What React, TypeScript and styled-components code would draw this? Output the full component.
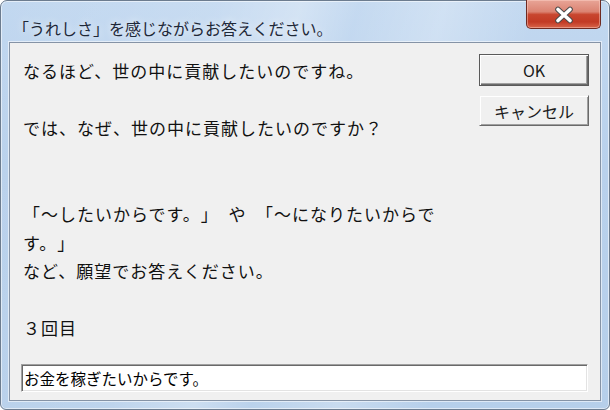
import React from 'react';
import styled, { createGlobalStyle } from 'styled-components';

const GlobalStyle = createGlobalStyle`
  html, body {
    margin: 0;
    padding: 0;
    background: #ffffff;
  }
  * {
    box-sizing: border-box;
    text-spacing-trim: space-all;
  }
`;

const promptLines = [
  'なるほど、世の中に貢献したいのですね。',
  '',
  'では、なぜ、世の中に貢献したいのですか？',
  '',
  '',
  '「～したいからです。」  や  「～になりたいからで',
  'す。」',
  'など、願望でお答えください。',
  '',
  '３回目',
];

const App: React.FC = () => {
  return (
    <>
      <GlobalStyle />
      <Window>
        <TitleBar>
          <Title>「うれしさ」を感じながらお答えください。</Title>
          <CloseButton aria-label="閉じる">
            <svg width="22" height="18" viewBox="0 0 22 18">
              <path
                d="M5 3.5 L17 14.5 M17 3.5 L5 14.5"
                stroke="#4a4a4a"
                strokeWidth="5.6"
                strokeLinecap="round"
                fill="none"
              />
              <path
                d="M5 3.5 L17 14.5 M17 3.5 L5 14.5"
                stroke="#ffffff"
                strokeWidth="3.6"
                strokeLinecap="round"
                fill="none"
              />
            </svg>
          </CloseButton>
        </TitleBar>
        <Client>
          <Prompt>
            {promptLines.map((line, i) => (
              <PromptLine key={i}>{line || '\u00a0'}</PromptLine>
            ))}
          </Prompt>
          <Buttons>
            <DialogButton $isDefault>OK</DialogButton>
            <DialogButton>キャンセル</DialogButton>
          </Buttons>
          <AnswerInput defaultValue="お金を稼ぎたいからです。" />
        </Client>
      </Window>
    </>
  );
};

export default App;

const Window = styled.div`
  width: 610px;
  height: 410px;
  display: flex;
  flex-direction: column;
  padding: 0 8px 8px 8px;
  border: 1px solid #6c7c8f;
  border-radius: 7px 7px 6px 6px;
  background:
    linear-gradient(
      105deg,
      rgba(255, 255, 255, 0) 0%,
      rgba(255, 255, 255, 0.1) 30%,
      rgba(255, 255, 255, 0.3) 42%,
      rgba(255, 255, 255, 0.05) 50%,
      rgba(255, 255, 255, 0.25) 62%,
      rgba(255, 255, 255, 0) 75%
    ),
    linear-gradient(to bottom, #c2d8f0 0%, #b9d1ec 40%, #b6cfea 100%);
  box-shadow: inset 0 0 0 1px rgba(255, 255, 255, 0.55);
`;

const TitleBar = styled.div`
  height: 41px;
  display: flex;
  justify-content: space-between;
  align-items: flex-start;
`;

const Title = styled.div`
  padding: 17px 0 0 4px;
  font-family: 'Noto Sans CJK JP', 'Noto Sans', sans-serif;
  font-size: 16px;
  line-height: 21px;
  color: #1e2838;
  text-shadow: 0 0 8px rgba(255, 255, 255, 0.9);
`;

const CloseButton = styled.div`
  width: 75px;
  height: 29px;
  margin-top: -1px;
  display: flex;
  align-items: center;
  justify-content: center;
  padding-top: 1px;
  border: 1px solid #6e2a22;
  border-top: none;
  border-radius: 0 0 5px 5px;
  background: linear-gradient(
    to bottom,
    #e8a597 0%,
    #db8372 42%,
    #c8462f 52%,
    #c23a25 78%,
    #d8654a 100%
  );
  box-shadow: inset 0 0 0 1px rgba(255, 215, 205, 0.45);
`;

const Client = styled.div`
  flex: 1;
  display: grid;
  grid-template-columns: 1fr auto;
  grid-template-rows: 1fr auto;
  background: #f0f0f0;
  border: 1px solid #8593a6;
  box-shadow: 0 0 0 1px rgba(255, 255, 255, 0.55);
`;

const Prompt = styled.div`
  padding: 14px 0 0 13px;
  font-family: 'Noto Sans CJK JP', 'Noto Sans', sans-serif;
  font-size: 17px;
  letter-spacing: 1px;
  color: #111;
`;

const PromptLine = styled.div`
  line-height: 28.6px;
  white-space: pre;
`;

const Buttons = styled.div`
  display: flex;
  flex-direction: column;
  gap: 9px;
  margin: 11px 11px 0 0;
  width: 110px;
`;

const DialogButton = styled.button<{ $isDefault?: boolean }>`
  height: ${(p) => (p.$isDefault ? '32px' : '31px')};
  padding: 0;
  font-family: 'Noto Sans CJK JP', 'Noto Sans', sans-serif;
  font-size: 16px;
  font-weight: 400;
  color: #1a1a1a;
  background: #f0f0f0;
  border: 1px solid ${(p) => (p.$isDefault ? '#5a5a5a' : '#f0f0f0')};
  border-right-color: ${(p) => (p.$isDefault ? '#5a5a5a' : '#6a6a6a')};
  border-bottom-color: ${(p) => (p.$isDefault ? '#5a5a5a' : '#6a6a6a')};
  box-shadow: ${(p) =>
    p.$isDefault
      ? 'inset 1px 1px 0 #ffffff, inset -1px -1px 0 #6a6a6a, inset -2px -2px 0 #a0a0a0'
      : 'inset 1px 1px 0 #ffffff, inset -1px -1px 0 #a0a0a0'};
`;

const AnswerInput = styled.input`
  grid-column: 1 / span 2;
  height: 28px;
  margin: 0 12px 8px 11px;
  padding: 0 0 0 2px;
  font-family: 'Noto Sans CJK JP', 'Noto Sans', sans-serif;
  font-size: 15.5px;
  color: #000;
  background: #ffffff;
  border: 1px solid #a0a0a0;
  border-right-color: #ffffff;
  border-bottom-color: #ffffff;
  box-shadow: inset 1px 1px 0 #696969, inset -1px -1px 0 #e3e3e3;
  outline: none;
`;
